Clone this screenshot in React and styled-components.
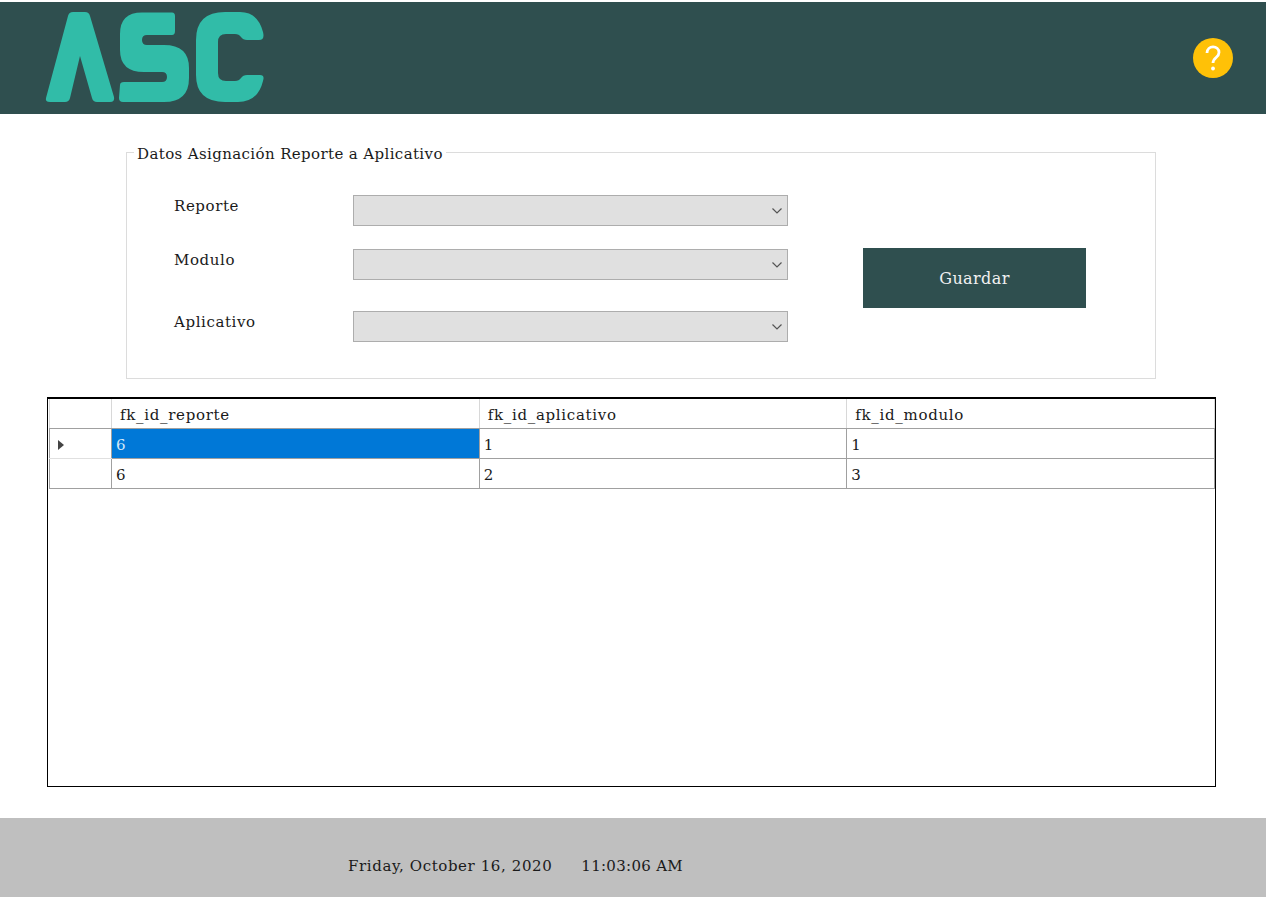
import React from 'react';
import styled, { createGlobalStyle } from 'styled-components';

const GlobalStyle = createGlobalStyle`
    html, body {
        margin: 0;
        padding: 0;
        background: #fff;
    }
    body {
        font-family: "DejaVu Serif", "Liberation Serif", serif;
        color: #1a1a1a;
    }
`;

const Page = styled.div`
    width: 1266px;
    height: 897px;
    display: flex;
    flex-direction: column;
    overflow: hidden;
`;

const Header = styled.header`
    height: 112px;
    margin-top: 2px;
    background: #2f4f4f;
    display: flex;
    align-items: flex-start;
    justify-content: space-between;
    flex-shrink: 0;
    padding: 8px 32px 0 44px;
    box-sizing: border-box;
`;

const HelpIcon = styled.svg`
    width: 42px;
    height: 42px;
    margin-top: 27px;
`;

const Content = styled.main`
    flex: 1;
    display: flex;
    flex-direction: column;
`;

const Group = styled.fieldset`
    width: 1030px;
    height: 238px;
    box-sizing: border-box;
    margin: 27px 0 0 126px;
    padding: 0;
    border: 1px solid #dcdcdc;
    display: flex;
    align-items: flex-start;
`;

const GroupTitle = styled.legend`
    font-size: 15px;
    line-height: 18px;
    margin-left: 7px;
    padding: 4px 3px 0;
    letter-spacing: 0.38px;
`;

const Fields = styled.div`
    display: flex;
    flex-direction: column;
    margin-left: 47px;
    padding-top: 32px;
`;

const FieldRow = styled.div`
    display: flex;
    margin-top: ${p => p.$gap || 0}px;
`;

const FieldLabel = styled.label`
    width: 179px;
    padding-top: 1px;
    font-size: 15px;
    line-height: 20px;
    letter-spacing: 0.6px;
`;

const Select = styled.div`
    width: 435px;
    height: 31px;
    box-sizing: border-box;
    background: #e0e0e0;
    border: 1px solid #adadad;
    display: flex;
    align-items: center;
    justify-content: flex-end;
    padding-right: 4px;
`;

const Chevron = styled.svg`
    width: 12px;
    height: 8px;
`;

const SaveButton = styled.button`
    width: 223px;
    height: 60px;
    margin: 85px 0 0 75px;
    background: #2f4f4f;
    border: none;
    color: #f1f1f1;
    font-family: inherit;
    font-size: 16px;
    letter-spacing: 0.4px;
`;

const GridFrame = styled.div`
    width: 1169px;
    height: 390px;
    box-sizing: border-box;
    margin: 18px 0 0 47px;
    border: 1px solid #000;
    border-top-width: 2px;
    padding-left: 1px;
    background: #fff;
`;

const Table = styled.table`
    width: 1166px;
    table-layout: fixed;
    border-collapse: collapse;
    font-size: 15px;
    letter-spacing: 0.7px;
`;

const HeadCell = styled.th`
    height: 29px;
    padding: 3px 0 0 8px;
    box-sizing: border-box;
    font-weight: 400;
    text-align: left;
    color: #1a1a1a;
    border-right: 1px solid #d8d8d8;
    border-left: 1px solid #d8d8d8;
    border-bottom: 1px solid #a0a0a0;
`;

const RowHead = styled.td`
    height: 30px;
    padding: 3px 0 0 8px;
    box-sizing: border-box;
    border-left: 1px solid #a0a0a0;
    border-right: 1px solid #a0a0a0;
    border-bottom: 1px solid ${p => p.$last ? '#a0a0a0' : '#e0e0e0'};
`;

const Cell = styled.td`
    height: 30px;
    padding: 3px 0 0 4px;
    box-sizing: border-box;
    background: ${p => p.$selected ? '#0078d7' : '#fff'};
    color: ${p => p.$selected ? '#d6e9f8' : '#1a1a1a'};
    border-right: 1px solid #a0a0a0;
    border-bottom: 1px solid #a0a0a0;
`;

const Marker = styled.svg`
    width: 7px;
    height: 10px;
    display: block;
`;

const Footer = styled.footer`
    height: 79px;
    background: #bfbfbf;
    flex-shrink: 0;
    display: flex;
    align-items: center;
    gap: 29px;
    padding: 17px 0 0 348px;
    box-sizing: border-box;
    font-size: 15px;
    letter-spacing: 0.6px;
`;

const Clock = styled.span`
    letter-spacing: 0.3px;
`;

// viewBox uses the page coordinates of the logo
const Logo = () => (
    <svg width="222" height="94" viewBox="44 10 222 94">
        <g fill="#31bca8">
            <path d="M46 98 L68 16 Q69 12 73 12 H85 Q89 12 90 16 L114 97 Q115 102 110 102 H97 Q93 102 92 98 L80 56 L70 98 Q69 102 65 102 H50 Q45 102 46 98 Z" />
            <path d="M142 12.500 H172 Q175 12.500 175 16 V31 Q175 35 172 35 H147 Q142 35 142 40 Q142 45 147 45 H164 Q189 45 189 68 V78 Q189 102 164 102 H123 Q119 102 119 98 L120 85 Q120 82 124 82 H162 Q167 82 167 77 Q167 72 162 72 H144 Q120 72 120 50 V34 Q120 12.500 142 12.500 Z" />
            <path d="M225 12 H240 Q258 12 263 32 Q265 40 259 40 H247 Q243 40 241 37 Q239 34 235 34 H226 Q218 34 218 42 V73 Q218 81 226 81 H235 Q239 81 241 78 Q243 75 247 75 H260 Q265 75 263 81 Q258 102 238 102 H225 Q196 102 196 75 V40 Q196 12 225 12 Z" />
        </g>
    </svg>
);

const SelectArrow = () => (
    <Chevron viewBox="0 0 12 8">
        <path d="M1.5 1.5 L6 6 L10.500 1.5" fill="none" stroke="#555" strokeWidth="1.2" />
    </Chevron>
);

const rows = [
    { id: 1, reporte: '6', aplicativo: '1', modulo: '1' },
    { id: 2, reporte: '6', aplicativo: '2', modulo: '3' },
];

const App = () => {
    return (
        <Page>
            <GlobalStyle />
            <Header>
                <Logo />
                <HelpIcon viewBox="0 0 42 42">
                    <circle cx="21" cy="21" r="20" fill="#ffc107" />
                    <path d="M15 16 C15 8 27 8 27 15.5 C27 20.5 21 20.500 21 26" fill="none" stroke="#fff" strokeWidth="2.800" />
                    <circle cx="21" cy="31.500" r="1.900" fill="#fff" />
                </HelpIcon>
            </Header>
            <Content>
                <Group>
                    <GroupTitle>Datos Asignación Reporte a Aplicativo</GroupTitle>
                    <Fields>
                        <FieldRow>
                            <FieldLabel>Reporte</FieldLabel>
                            <Select><SelectArrow /></Select>
                        </FieldRow>
                        <FieldRow $gap={23}>
                            <FieldLabel>Modulo</FieldLabel>
                            <Select><SelectArrow /></Select>
                        </FieldRow>
                        <FieldRow $gap={31}>
                            <FieldLabel>Aplicativo</FieldLabel>
                            <Select><SelectArrow /></Select>
                        </FieldRow>
                    </Fields>
                    <SaveButton>Guardar</SaveButton>
                </Group>
                <GridFrame>
                    <Table>
                        <colgroup>
                            <col style={{ width: 62 }} />
                            <col />
                            <col />
                            <col />
                        </colgroup>
                        <thead>
                            <tr>
                                <HeadCell />
                                <HeadCell>fk_id_reporte</HeadCell>
                                <HeadCell>fk_id_aplicativo</HeadCell>
                                <HeadCell>fk_id_modulo</HeadCell>
                            </tr>
                        </thead>
                        <tbody>
                            {rows.map((row, i) => (
                                <tr key={row.id}>
                                    <RowHead $last={i === rows.length - 1}>
                                        {i === 0 && <Marker viewBox="0 0 7 10"><path d="M0 0 L6 5 L0 10 Z" fill="#444" /></Marker>}
                                    </RowHead>
                                    <Cell $selected={i === 0}>{row.reporte}</Cell>
                                    <Cell>{row.aplicativo}</Cell>
                                    <Cell>{row.modulo}</Cell>
                                </tr>
                            ))}
                        </tbody>
                    </Table>
                </GridFrame>
            </Content>
            <Footer>
                <span>Friday, October 16, 2020</span>
                <Clock>11:03:06 AM</Clock>
            </Footer>
        </Page>
    );
};

export default App;
